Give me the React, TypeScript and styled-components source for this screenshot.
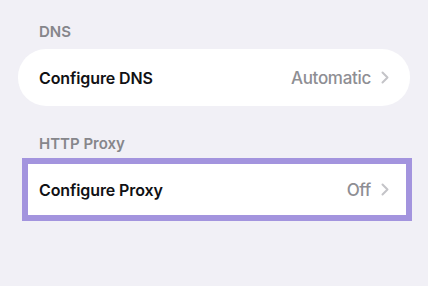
import React from "react";
import styled, { createGlobalStyle } from "styled-components";

const Global = createGlobalStyle`
  html, body { margin: 0; padding: 0; background: #f1f0f6; }
  body { font-family: Inter, "Noto Sans", sans-serif; -webkit-font-smoothing: antialiased; }
`;

const Page = styled.div`
  display: flex;
  flex-direction: column;
  padding: 23px 18px 0 18px;
  height: 286px;
  box-sizing: border-box;
`;

const SectionHeader = styled.div<{ $gapBelow: number }>`
  padding-left: 21px;
  font-size: 15px;
  line-height: 18px;
  font-weight: 600;
  color: #86868b;
  margin-bottom: ${(p) => p.$gapBelow}px;
`;

const Card = styled.div`
  display: flex;
  align-items: center;
  height: 57px;
  border-radius: 28px;
  background: #ffffff;
  padding: 0 21px 0 21px;
  margin-bottom: 29px;
`;

const Highlight = styled.div`
  margin: 0 -2px 0 4px;
  border: 6px solid #a394de;
  background: #ffffff;
  height: 51px;
  display: flex;
  align-items: center;
  padding: 0 17px 0 11px;
`;

const Label = styled.span`
  flex: 1;
  font-size: 16px;
  font-weight: 600;
  color: #111114;
  letter-spacing: -0.1px;
`;

const Value = styled.span`
  font-size: 17px;
  font-weight: 500;
  color: #8e8e93;
  margin-right: 10px;
  letter-spacing: -0.3px;
`;

const Chevron = () => (
  <svg width="8" height="13" viewBox="0 0 8 13" fill="none">
    <path d="M1.5 1.5 L6.5 6.5 L1.5 11.5" stroke="#c4c4c8" strokeWidth="2" strokeLinecap="round" strokeLinejoin="round" />
  </svg>
);

export default function App() {
  return (
    <>
      <Global />
      <Page>
        <SectionHeader $gapBelow={8}>DNS</SectionHeader>
        <Card>
          <Label>Configure DNS</Label>
          <Value>Automatic</Value>
          <Chevron />
        </Card>
        <SectionHeader $gapBelow={5}>HTTP Proxy</SectionHeader>
        <Highlight>
          <Label>Configure Proxy</Label>
          <Value>Off</Value>
          <Chevron />
        </Highlight>
      </Page>
    </>
  );
}
